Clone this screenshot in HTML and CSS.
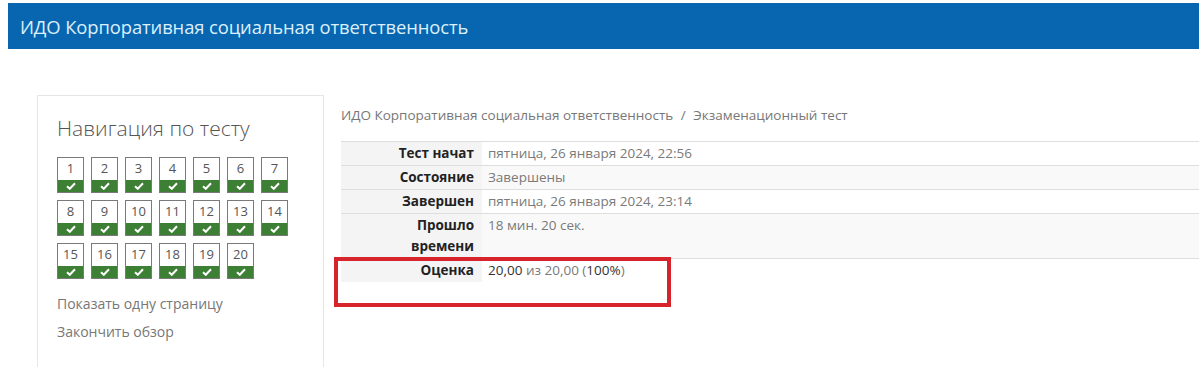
FILE: index.html
```html
<!DOCTYPE html>
<html lang="ru">
<head>
    <meta charset="UTF-8">
    <title>ИДО Корпоративная социальная ответственность</title>
    <link rel="stylesheet" href="styles.css">
</head>
<body>

<header class="page-header">
    <h1>ИДО Корпоративная социальная ответственность</h1>
</header>

<div class="page">
    <aside class="quiz-nav">
        <h2>Навигация по тесту</h2>
        <div class="qn-buttons" id="qnButtons"></div>
        <a href="#" class="nav-link">Показать одну страницу</a>
        <a href="#" class="nav-link">Закончить обзор</a>
    </aside>

    <main class="content">
        <div class="breadcrumb">
            <a href="#">ИДО Корпоративная социальная ответственность</a>
            <span class="sep">/</span>
            <a href="#">Экзаменационный тест</a>
        </div>

        <div class="summary-wrap">
            <table class="summary">
                <tr>
                    <th>Тест начат</th>
                    <td>пятница, 26 января 2024, 22:56</td>
                </tr>
                <tr class="odd">
                    <th>Состояние</th>
                    <td>Завершены</td>
                </tr>
                <tr>
                    <th>Завершен</th>
                    <td>пятница, 26 января 2024, 23:14</td>
                </tr>
                <tr class="odd">
                    <th>Прошло<br>времени</th>
                    <td>18 мин. 20 сек.</td>
                </tr>
                <tr class="last">
                    <th>Оценка</th>
                    <td><span class="dark">20,00</span> из 20,00 (<span class="dark">100%</span>)</td>
                </tr>
            </table>
            <div class="highlight"></div>
        </div>
    </main>
</div>

<script>
    var box = document.getElementById('qnButtons');
    var check = '<svg width="10" height="8" viewBox="0 0 10 8"><path d="M1 4.2 L3.8 6.8 L9 1.2" fill="none" stroke="#fff" stroke-width="2"/></svg>';
    for (var i = 1; i <= 20; i++) {
        box.innerHTML += '<a href="#" class="qn"><span class="num">' + i + '</span><span class="state">' + check + '</span></a>';
    }
</script>

</body>
</html>
```

FILE: styles.css
```css
/* Global */
* {
    box-sizing: border-box;
    margin: 0;
    padding: 0;
}
body {
    font-family: 'Open Sans', 'Noto Sans', sans-serif;
    background-color: #fff;
    color: #333;
    overflow: hidden;
}
a {
    text-decoration: none;
    color: inherit;
}

/* Header */
.page-header {
    background-color: #0866b0;
    margin: 3px 0 0 8px;
    height: 46px;
    display: flex;
    align-items: center;
    padding-left: 12px;
}
.page-header h1 {
    font-size: 18.4px;
    font-weight: 400;
    color: #dcf0fc;
    letter-spacing: -0.1px;
}

/* Layout */
.page {
    display: flex;
    align-items: flex-start;
    gap: 17px;
    padding-left: 37px;
    margin-top: 46px;
}

/* Quiz navigation block */
.quiz-nav {
    width: 287px;
    height: 290px;
    border: 1px solid #e6e6e6;
    padding: 16px 19px 0;
}
.quiz-nav h2 {
    font-size: 21px;
    font-weight: 300;
    color: #555;
    line-height: 32px;
    margin-bottom: 13px;
}
.qn-buttons {
    display: flex;
    flex-wrap: wrap;
    gap: 7px;
    width: 240px;
    margin-bottom: 11px;
}
.qn {
    width: 27px;
    height: 36px;
    border: 1px solid #7a7a7a;
    display: flex;
    flex-direction: column;
}
.qn .num {
    flex: 1;
    font-size: 13px;
    color: #555;
    text-align: center;
    line-height: 21px;
}
.qn .state {
    height: 12px;
    background-color: #3d7f35;
    display: flex;
    align-items: center;
    justify-content: center;
}
.nav-link {
    display: block;
    font-size: 14px;
    color: #777;
    line-height: 28px;
}

/* Main content */
.content {
    flex: 1;
}
.breadcrumb {
    font-size: 13.5px;
    color: #777;
    line-height: 20px;
    margin-top: 10px;
    margin-bottom: 16px;
}
.breadcrumb .sep {
    margin: 0 4px;
}
.summary-wrap {
    position: relative;
}
.summary {
    width: 100%;
    border-collapse: collapse;
    font-size: 13.5px;
}
.summary tr {
    border-top: 1px solid #dedede;
}
.summary th {
    width: 141px;
    text-align: right;
    font-weight: 700;
    color: #222;
    background-color: #f4f4f4;
    padding: 1px 8px 1px 4px;
    line-height: 21px;
    vertical-align: top;
}
.summary td {
    color: #7a7a7a;
    padding: 1px 6px;
    line-height: 21px;
    vertical-align: top;
}
.summary tr.odd td {
    background-color: #f9f9f9;
}
.summary .dark {
    color: #333;
}
.highlight {
    position: absolute;
    left: -7px;
    top: 116px;
    width: 337px;
    height: 50px;
    border: 4px solid #d7232c;
}
```
